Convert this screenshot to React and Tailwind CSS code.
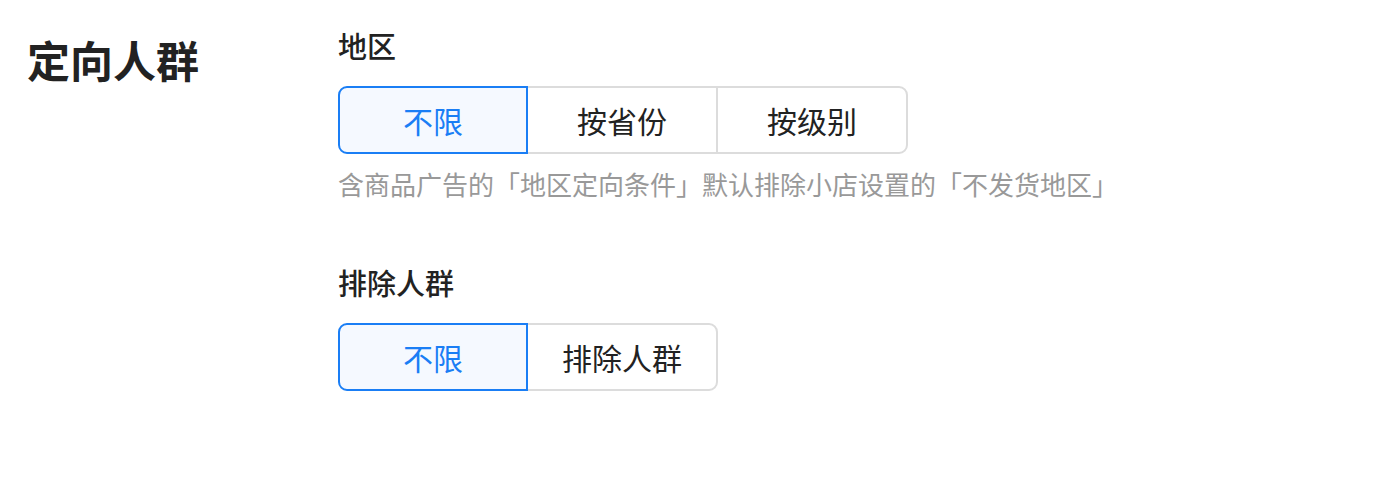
import React from 'react';

const font = { fontFamily: '"Noto Sans CJK SC", "Noto Sans", sans-serif' };

const Segmented = ({ options, active }) => (
  <div className="flex">
    {options.map((opt, i) => {
      const isActive = i === active;
      const first = i === 0;
      const last = i === options.length - 1;
      return (
        <div
          key={opt}
          className={`h-[68px] flex items-center justify-center text-[30px] border-2 ${
            first ? 'w-[190px] rounded-l-[9px]' : 'w-[192px] -ml-[2px]'
          } ${last ? 'rounded-r-[9px]' : ''} ${
            isActive
              ? 'border-[#1a7ef5] bg-[#f5f9ff] text-[#1a7ef5] z-10'
              : 'border-[#dcdcdc] bg-white text-[#222222]'
          }`}
        >
          {opt}
        </div>
      );
    })}
  </div>
);

export default function App() {
  return (
    <div className="w-[1380px] h-[480px] bg-white flex" style={font}>
      <div className="w-[338px] pl-[27px] pt-[30px]">
        <h2 className="text-[43px] font-bold text-[#222222] leading-[58px]">定向人群</h2>
      </div>
      <div className="pt-[25px]">
        <div className="text-[29px] font-medium text-[#222222] leading-[40px]">地区</div>
        <div className="mt-[21px]">
          <Segmented options={['不限', '按省份', '按级别']} active={0} />
        </div>
        <div className="mt-[11px] text-[26px] text-[#999999] leading-[38px]">
          含商品广告的「地区定向条件」默认排除小店设置的「不发货地区」
        </div>
        <div className="mt-[59px] text-[29px] font-medium text-[#222222] leading-[40px]">排除人群</div>
        <div className="mt-[21px]">
          <Segmented options={['不限', '排除人群']} active={0} />
        </div>
      </div>
    </div>
  );
}
